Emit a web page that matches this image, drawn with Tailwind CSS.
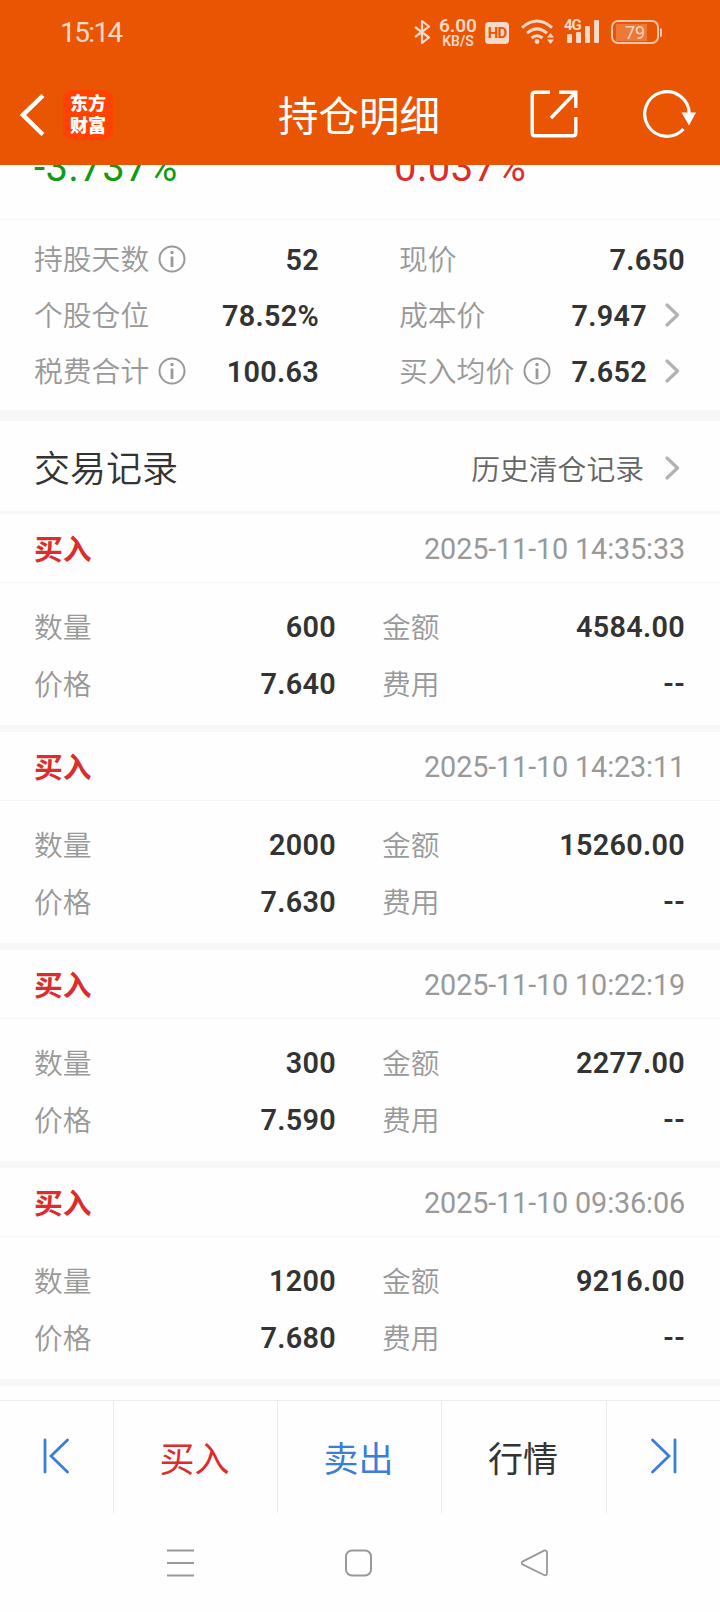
<!DOCTYPE html>
<html lang="zh-CN">
  <head>
    <meta charset="UTF-8" />
    <meta name="viewport" content="width=device-width, initial-scale=1.0" />
    <title>持仓明细</title>
    <script src="https://cdn.jsdelivr.net/npm/@tailwindcss/browser@4"></script>
  </head>
  <body class="h-[1612px] w-[720px] overflow-hidden bg-[#fefefe] font-['Roboto','Noto_Sans_CJK_SC',sans-serif] text-[#333]">
    <div class="flex h-full flex-col">
      <header class="h-[165px] shrink-0 bg-[#ea5504] text-white">
        <!-- status bar -->
        <div class="flex h-16 items-center pl-[60px] text-[#fbd9c6]">
          <span class="mt-[2px] w-[353px] text-[28px] tracking-[-1.6px]">15:14</span>
          <svg class="h-[26px] w-[18px]" viewBox="0 0 18 26" fill="none" stroke="currentColor" stroke-width="2.2" stroke-linejoin="round">
            <path d="M2 8 L16 18.5 L9 24 V2 L16 7.5 L2 18" />
          </svg>
          <div class="ml-[7px] flex w-[40px] flex-col items-center font-semibold">
            <span class="text-[19px] leading-[17px]">6.00</span>
            <span class="text-[14px] leading-[14px]">KB/S</span>
          </div>
          <span class="mt-[2px] ml-[7px] flex h-[22px] w-6 items-center justify-center rounded-[4px] bg-[#fbd9c6] text-[15px] font-bold tracking-[-1px] text-[#ea5504]">HD</span>
          <svg class="ml-3 h-[26px] w-[34px]" viewBox="0 0 34 26" fill="none" stroke="currentColor" stroke-width="3">
            <path d="M1 8.6 Q16 -4.5 31 8.6" />
            <path d="M6 14.2 Q16 5.5 26 14.2" />
            <path d="M10.5 19 Q16 14.5 21.5 19" />
            <circle cx="16" cy="22.5" r="2.4" fill="currentColor" stroke="none" />
            <path d="M26 18.5 L29.5 14 L33 18.5 Z M26 20.5 L29.5 25 L33 20.5 Z" fill="currentColor" stroke="none" />
          </svg>
          <div class="relative ml-[9px] h-[26px] w-[36px]">
            <span class="absolute -top-px left-0 text-[15px] leading-[14px] font-bold tracking-[-1px]">4G</span>
            <svg class="h-[26px] w-[36px]" viewBox="0 0 36 26" fill="currentColor">
              <rect x="3" y="15" width="5" height="9" rx="1" />
              <rect x="12" y="13" width="5" height="11" rx="1" />
              <rect x="21" y="7" width="5" height="17" rx="1" />
              <rect x="30" y="1" width="5" height="23" rx="1" />
            </svg>
          </div>
          <div class="ml-[11px] flex h-6 w-[48px] items-center rounded-[7px] border-2 border-[#f9c3a5] pl-[3px]">
            <span class="h-[17px] w-[31px] bg-[#ee7836] pl-[9px] text-[18px] leading-[18px]">79</span>
          </div>
          <span class="ml-px h-[9px] w-[2px] rounded-r bg-[#f9c3a5]"></span>
        </div>
        <!-- title bar -->
        <div class="flex h-[101px] items-center pl-5">
          <svg class="h-[42px] w-[25px]" viewBox="0 0 25 42" fill="none" stroke="currentColor" stroke-width="4.4">
            <path d="M23 1.5 L3 21 L23 40.5" />
          </svg>
          <div class="ml-[18px] flex h-[50px] w-[50px] flex-col items-center justify-center rounded-[9px] bg-[#ff4200] text-[18px] leading-[22px] font-black">
            <span>东方</span>
            <span>财富</span>
          </div>
          <h1 class="mt-[5px] ml-[165px] text-[40.5px] leading-[60px]">持仓明细</h1>
          <svg class="mb-[2px] ml-[90px] h-12 w-12" viewBox="0 0 48 48" fill="none" stroke="currentColor" stroke-width="3.4">
            <path d="M20 2.2 H5 Q2.2 2.2 2.2 5 V43 Q2.2 45.8 5 45.8 H43 Q45.8 45.8 45.8 43 V27" />
            <path d="M29 2.2 H45.8 V18 M45.8 2.2 L21 28" />
          </svg>
          <svg class="mb-[2px] ml-[65px] h-12 w-[54px]" viewBox="0 0 54 48" fill="none" stroke="currentColor" stroke-width="3.2">
            <path d="M40.5 39 A22.3 22.3 0 1 1 46.3 24" />
            <path d="M38.6 22.5 H53 L46 35.5 Z" fill="currentColor" stroke="none" />
          </svg>
        </div>
      </header>

      <main class="h-[1235px] shrink-0 overflow-hidden text-[28.8px]">
        <!-- bottom of the scrolled profit row -->
        <section class="flex h-[55px] overflow-hidden border-b border-[#f4f4f4] pl-[34px] text-[40px] leading-10 tracking-[0.4px]">
          <span class="-mt-[17px] w-[360px] text-[#129a12]">-3.737%</span>
          <span class="-mt-[17px] text-[#dd2c2c]">0.037%</span>
        </section>

        <section class="grid h-[190px] grid-cols-[285px_286px] grid-rows-[56px_56px_56px] gap-x-[80px] pt-3 pl-[34px]">
          <div class="flex items-center">
            <span class="mt-[2px] font-[350] text-[#999]">持股天数</span>
            <svg class="mb-[2px] ml-[9px] h-7 w-7 text-[#999]" viewBox="0 0 28 28" fill="none" stroke="currentColor" stroke-width="2">
              <circle cx="14" cy="14" r="12.5" />
              <path d="M14 11.5 V22" stroke-width="2.8" />
              <circle cx="14" cy="7.5" r="1.7" fill="currentColor" stroke="none" />
            </svg>
            <span class="mt-[2px] ml-auto font-semibold tracking-[0.3px]">52</span>
          </div>
          <div class="flex items-center">
            <span class="mt-[2px] font-[350] text-[#999]">现价</span>
            <span class="mt-[2px] ml-auto font-semibold tracking-[0.3px]">7.650</span>
          </div>
          <div class="flex items-center">
            <span class="mt-[2px] font-[350] text-[#999]">个股仓位</span>
            <span class="mt-[2px] ml-auto font-semibold tracking-[0.3px]">78.52%</span>
          </div>
          <div class="flex items-center">
            <span class="mt-[2px] font-[350] text-[#999]">成本价</span>
            <span class="mt-[2px] ml-auto font-semibold tracking-[0.3px]">7.947</span>
            <svg class="mr-[5px] mb-[2px] ml-[18px] h-6 w-[15px] text-[#b2b2b2]" viewBox="0 0 15 24" fill="none" stroke="currentColor" stroke-width="3.2" stroke-linecap="round" stroke-linejoin="round">
              <path d="M2 2 L12.5 12 L2 22" />
            </svg>
          </div>
          <div class="flex items-center">
            <span class="mt-[2px] font-[350] text-[#999]">税费合计</span>
            <svg class="mb-[2px] ml-[9px] h-7 w-7 text-[#999]" viewBox="0 0 28 28" fill="none" stroke="currentColor" stroke-width="2">
              <circle cx="14" cy="14" r="12.5" />
              <path d="M14 11.5 V22" stroke-width="2.8" />
              <circle cx="14" cy="7.5" r="1.7" fill="currentColor" stroke="none" />
            </svg>
            <span class="mt-[2px] ml-auto font-semibold tracking-[0.3px]">100.63</span>
          </div>
          <div class="flex items-center">
            <span class="mt-[2px] font-[350] text-[#999]">买入均价</span>
            <svg class="mb-[2px] ml-[9px] h-7 w-7 text-[#999]" viewBox="0 0 28 28" fill="none" stroke="currentColor" stroke-width="2">
              <circle cx="14" cy="14" r="12.5" />
              <path d="M14 11.5 V22" stroke-width="2.8" />
              <circle cx="14" cy="7.5" r="1.7" fill="currentColor" stroke="none" />
            </svg>
            <span class="mt-[2px] ml-auto font-semibold tracking-[0.3px]">7.652</span>
            <svg class="mr-[5px] mb-[2px] ml-[18px] h-6 w-[15px] text-[#b2b2b2]" viewBox="0 0 15 24" fill="none" stroke="currentColor" stroke-width="3.2" stroke-linecap="round" stroke-linejoin="round">
              <path d="M2 2 L12.5 12 L2 22" />
            </svg>
          </div>
        </section>

        <section class="flex h-[104px] items-center border-t-11 border-b-3 border-[#f6f7f9] pr-[40px] pl-[34px]">
          <h2 class="mt-[7px] text-[36px] font-[350]">交易记录</h2>
          <a class="mt-[10px] ml-auto font-[350] text-[#666]">历史清仓记录</a>
          <svg class="mt-1 ml-[21px] h-6 w-[15px] text-[#b2b2b2]" viewBox="0 0 15 24" fill="none" stroke="currentColor" stroke-width="3.2" stroke-linecap="round" stroke-linejoin="round">
            <path d="M2 2 L12.5 12 L2 22" />
          </svg>
        </section>

        <article class="h-[218px] border-b-7 border-[#f6f7f9]">
          <div class="flex h-[69px] items-center justify-between border-b border-[#f5f5f6] pr-[35px] pl-[34px]">
            <span class="mt-[5px] font-bold text-[#dd2c2c]">买入</span>
            <span class="mt-[4px] tracking-[-0.14px] text-[#999]">2025-11-10 14:35:33</span>
          </div>
          <div class="grid grid-cols-[302px_303px] grid-rows-[57px_57px] gap-x-[46px] pt-4 pl-[34px]">
            <div class="flex items-center justify-between">
              <span class="mt-[2px] font-[350] text-[#999]">数量</span>
              <span class="font-semibold tracking-[0.3px]">600</span>
            </div>
            <div class="flex items-center justify-between">
              <span class="mt-[2px] font-[350] text-[#999]">金额</span>
              <span class="font-semibold tracking-[0.3px]">4584.00</span>
            </div>
            <div class="flex items-center justify-between">
              <span class="mt-[2px] font-[350] text-[#999]">价格</span>
              <span class="font-semibold tracking-[0.3px]">7.640</span>
            </div>
            <div class="flex items-center justify-between">
              <span class="mt-[2px] font-[350] text-[#999]">费用</span>
              <span class="font-semibold tracking-[0.3px]">--</span>
            </div>
          </div>
        </article>

        <article class="h-[218px] border-b-7 border-[#f6f7f9]">
          <div class="flex h-[69px] items-center justify-between border-b border-[#f5f5f6] pr-[35px] pl-[34px]">
            <span class="mt-[5px] font-bold text-[#dd2c2c]">买入</span>
            <span class="mt-[4px] tracking-[-0.14px] text-[#999]">2025-11-10 14:23:11</span>
          </div>
          <div class="grid grid-cols-[302px_303px] grid-rows-[57px_57px] gap-x-[46px] pt-4 pl-[34px]">
            <div class="flex items-center justify-between">
              <span class="mt-[2px] font-[350] text-[#999]">数量</span>
              <span class="font-semibold tracking-[0.3px]">2000</span>
            </div>
            <div class="flex items-center justify-between">
              <span class="mt-[2px] font-[350] text-[#999]">金额</span>
              <span class="font-semibold tracking-[0.3px]">15260.00</span>
            </div>
            <div class="flex items-center justify-between">
              <span class="mt-[2px] font-[350] text-[#999]">价格</span>
              <span class="font-semibold tracking-[0.3px]">7.630</span>
            </div>
            <div class="flex items-center justify-between">
              <span class="mt-[2px] font-[350] text-[#999]">费用</span>
              <span class="font-semibold tracking-[0.3px]">--</span>
            </div>
          </div>
        </article>

        <article class="h-[218px] border-b-7 border-[#f6f7f9]">
          <div class="flex h-[69px] items-center justify-between border-b border-[#f5f5f6] pr-[35px] pl-[34px]">
            <span class="mt-[5px] font-bold text-[#dd2c2c]">买入</span>
            <span class="mt-[4px] tracking-[-0.14px] text-[#999]">2025-11-10 10:22:19</span>
          </div>
          <div class="grid grid-cols-[302px_303px] grid-rows-[57px_57px] gap-x-[46px] pt-4 pl-[34px]">
            <div class="flex items-center justify-between">
              <span class="mt-[2px] font-[350] text-[#999]">数量</span>
              <span class="font-semibold tracking-[0.3px]">300</span>
            </div>
            <div class="flex items-center justify-between">
              <span class="mt-[2px] font-[350] text-[#999]">金额</span>
              <span class="font-semibold tracking-[0.3px]">2277.00</span>
            </div>
            <div class="flex items-center justify-between">
              <span class="mt-[2px] font-[350] text-[#999]">价格</span>
              <span class="font-semibold tracking-[0.3px]">7.590</span>
            </div>
            <div class="flex items-center justify-between">
              <span class="mt-[2px] font-[350] text-[#999]">费用</span>
              <span class="font-semibold tracking-[0.3px]">--</span>
            </div>
          </div>
        </article>

        <article class="h-[218px] border-b-7 border-[#f6f7f9]">
          <div class="flex h-[69px] items-center justify-between border-b border-[#f5f5f6] pr-[35px] pl-[34px]">
            <span class="mt-[5px] font-bold text-[#dd2c2c]">买入</span>
            <span class="mt-[4px] tracking-[-0.14px] text-[#999]">2025-11-10 09:36:06</span>
          </div>
          <div class="grid grid-cols-[302px_303px] grid-rows-[57px_57px] gap-x-[46px] pt-4 pl-[34px]">
            <div class="flex items-center justify-between">
              <span class="mt-[2px] font-[350] text-[#999]">数量</span>
              <span class="font-semibold tracking-[0.3px]">1200</span>
            </div>
            <div class="flex items-center justify-between">
              <span class="mt-[2px] font-[350] text-[#999]">金额</span>
              <span class="font-semibold tracking-[0.3px]">9216.00</span>
            </div>
            <div class="flex items-center justify-between">
              <span class="mt-[2px] font-[350] text-[#999]">价格</span>
              <span class="font-semibold tracking-[0.3px]">7.680</span>
            </div>
            <div class="flex items-center justify-between">
              <span class="mt-[2px] font-[350] text-[#999]">费用</span>
              <span class="font-semibold tracking-[0.3px]">--</span>
            </div>
          </div>
        </article>
      </main>

      <!-- trade actions -->
      <footer class="grid h-[113px] shrink-0 grid-cols-[114px_164px_164px_165px_113px] border-t border-[#ebebeb] text-[35px]">
        <a class="flex items-center justify-center border-r border-[#ebebeb] text-[#3a7fd5]">
          <svg class="mr-px mb-[3px] h-9 w-[26px]" viewBox="0 0 26 36" fill="none" stroke="currentColor" stroke-width="2.8" stroke-linecap="round">
            <path d="M2 2 V34 M24.5 2 L8 18 L24.5 34" />
          </svg>
        </a>
        <a class="flex items-center justify-center border-r border-[#ebebeb] pt-2 pr-[2px] text-[#dd2c2c]">买入</a>
        <a class="flex items-center justify-center border-r border-[#ebebeb] pt-2 pr-[2px] text-[#3a7fd5]">卖出</a>
        <a class="flex items-center justify-center border-r border-[#ebebeb] pt-2 pr-[2px]">行情</a>
        <a class="flex items-center justify-center text-[#3a7fd5]">
          <svg class="mb-[3px] h-9 w-[26px]" viewBox="0 0 26 36" fill="none" stroke="currentColor" stroke-width="2.8" stroke-linecap="round">
            <path d="M24 2 V34 M1.5 2 L18 18 L1.5 34" />
          </svg>
        </a>
      </footer>

      <!-- system navigation -->
      <nav class="flex h-[99px] items-center pl-[166px] text-[#999]">
        <svg class="h-7 w-7" viewBox="0 0 28 28" stroke="currentColor" stroke-width="2">
          <path d="M1 1.5 H28 M1 14 H28 M1 26.5 H28" />
        </svg>
        <svg class="ml-[150px] h-7 w-7" viewBox="0 0 28 28" fill="none" stroke="currentColor" stroke-width="2">
          <rect x="2" y="1.5" width="25" height="25" rx="6" />
        </svg>
        <svg class="ml-[149px] h-7 w-7" viewBox="0 0 28 28" fill="none" stroke="currentColor" stroke-width="1.8" stroke-linejoin="round">
          <path d="M1.5 12.6 L23 1.6 Q26 0.8 26 3.8 V24 Q26 27 23 26 L1.5 15.4 Q-0.5 14 1.5 12.6 Z" />
        </svg>
      </nav>
    </div>
  </body>
</html>
